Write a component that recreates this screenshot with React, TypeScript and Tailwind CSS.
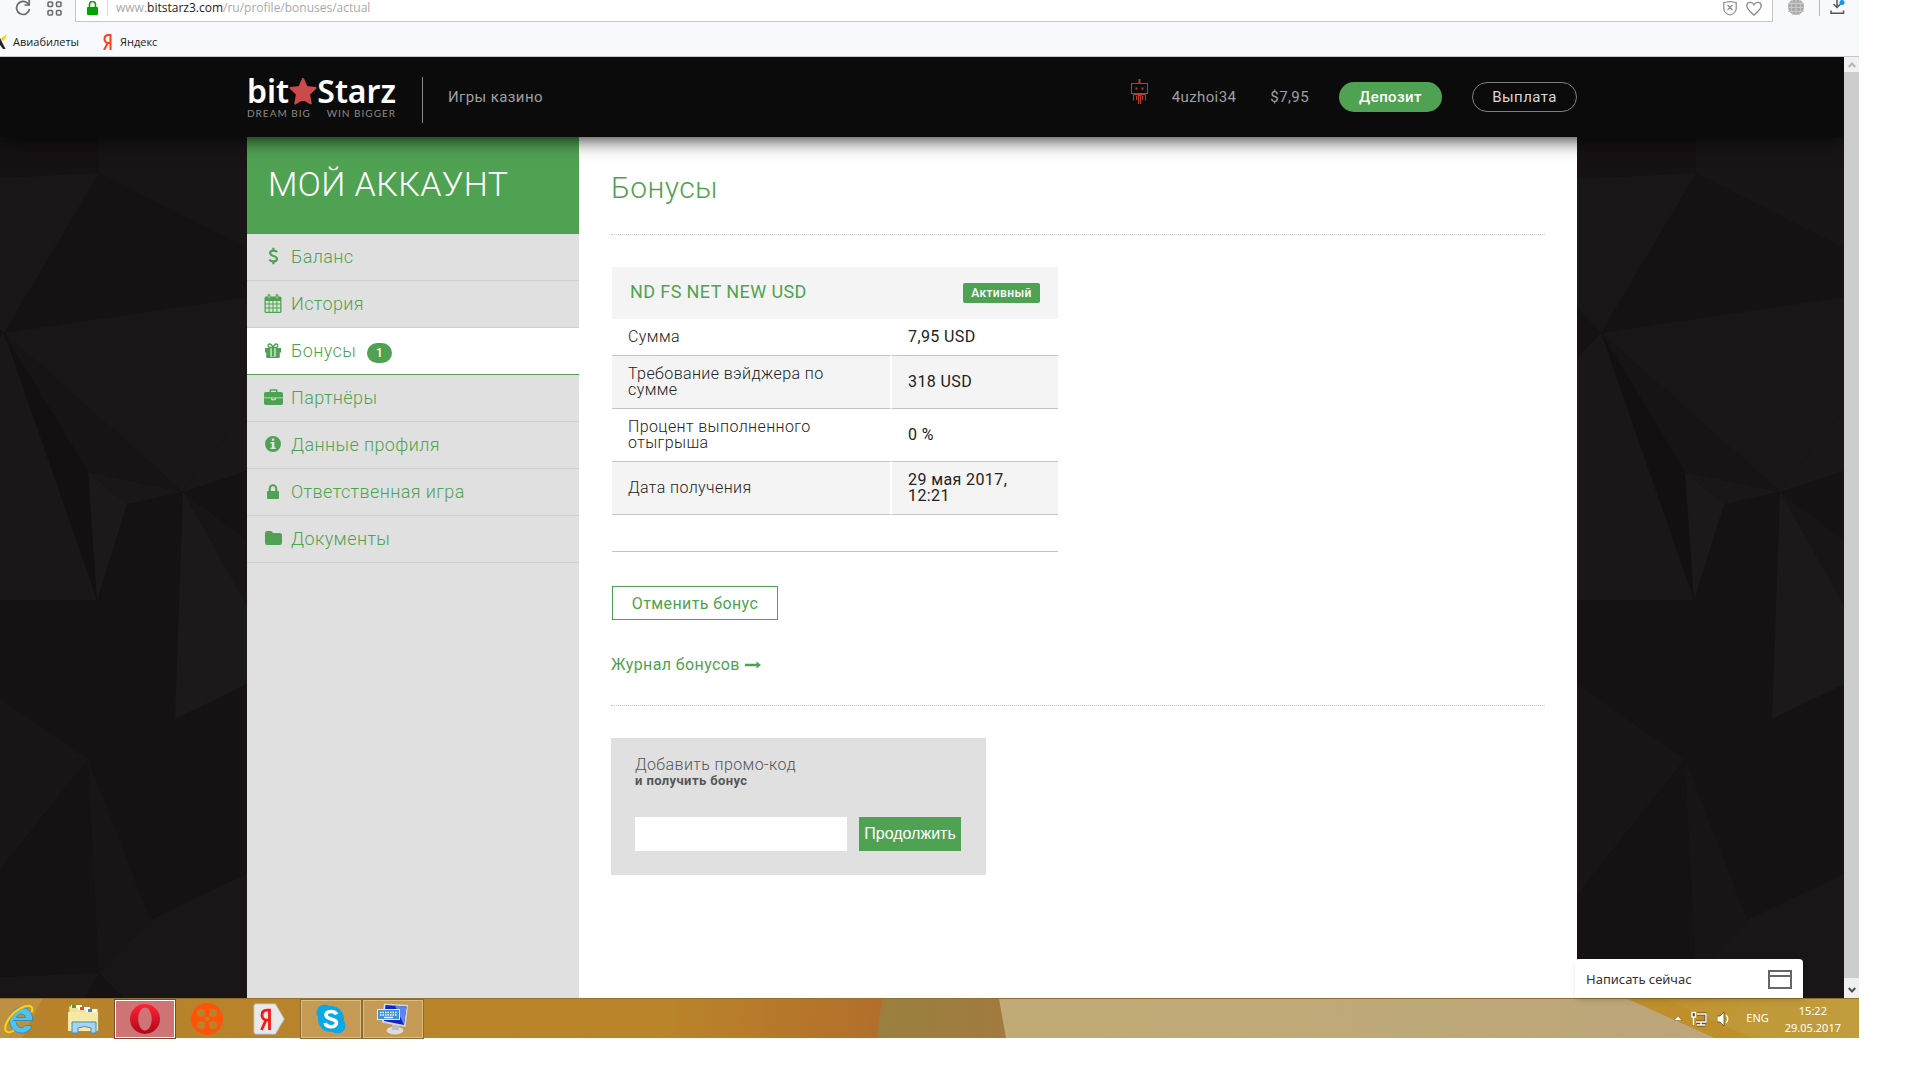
import type { ReactNode } from "react";

const NAV: { label: string; icon: ReactNode; active?: boolean; badge?: string }[] = [
  { label: "Баланс", icon: <DollarIcon /> },
  { label: "История", icon: <CalendarIcon /> },
  { label: "Бонусы", icon: <GiftIcon />, active: true, badge: "1" },
  { label: "Партнёры", icon: <BriefcaseIcon /> },
  { label: "Данные профиля", icon: <InfoIcon /> },
  { label: "Ответственная игра", icon: <LockIcon /> },
  { label: "Документы", icon: <FolderIcon /> },
];

const ROWS = [
  { label: "Сумма", value: "7,95 USD" },
  { label: "Требование вэйджера по сумме", value: "318 USD" },
  { label: "Процент выполненного отыгрыша", value: "0 %" },
  { label: "Дата получения", value: "29 мая 2017, 12:21" },
];

function DollarIcon() {
  return (
    <svg viewBox="0 0 12 20" className="h-[18px]" fill="none" stroke="currentColor" strokeWidth="2.4">
      <path d="M10.2 5.6C9.2 4.500 7.700 4 6 4 3.800 4 2.300 5.100 2.300 6.800 2.300 10.800 10 9 10 13.100 10 15 8.300 16 6 16 4.200 16 2.500 15.300 1.400 14" />
      <path d="M6 .8v3.500M6 15.700v3.500" />
    </svg>
  );
}

function CalendarIcon() {
  return (
    <svg viewBox="0 0 18 19" className="h-[19px]" fill="currentColor">
      <path
        fillRule="evenodd"
        d="M2 2.500h1.500V1.500a1.500 1.500 0 0 1 3 0v1h5v-1a1.500 1.500 0 0 1 3 0v1H16a1.500 1.500 0 0 1 1.500 1.500v13.500A1.500 1.500 0 0 1 16 19H2a1.500 1.500 0 0 1-1.500-1.500V4A1.500 1.500 0 0 1 2 2.500ZM1.800 7v2.600h2.800V7Zm3.800 0v2.600h2.900V7Zm3.900 0v2.600h2.900V7Zm3.900 0v2.600h2.800V7ZM1.800 10.600v3h2.800v-3Zm3.800 0v3h2.900v-3Zm3.900 0v3h2.900v-3Zm3.900 0v3h2.800v-3ZM1.800 14.600v3.200h2.800v-3.200Zm3.800 0v3.200h2.900v-3.200Zm3.900 0v3.200h2.900v-3.200Zm3.900 0v3.200h2.800v-3.200ZM4.600 1.500v3h.8v-3Zm8 0v3h.8v-3Z"
      />
    </svg>
  );
}

function GiftIcon() {
  return (
    <svg viewBox="0 0 16 15" className="h-[15px]" fill="currentColor">
      <path d="M0 5h5.500v4.500H0Zm10.500 0H16v4.500h-5.500ZM1.200 9h4.300v6H2.200a1 1 0 0 1-1-1ZM10.500 9h4.300v5a1 1 0 0 1-1 1h-3.300ZM6.600 5h2.800v8.500H6.600ZM5.500 13.800h5V15h-5Z" />
      <path d="M8 4.500H4.800A1.700 1.700 0 0 1 4.800 1C6.300 1 7.200 2.500 8 4.500 8.800 2.500 9.700 1 11.200 1a1.700 1.700 0 0 1 0 3.500Z" fill="none" stroke="currentColor" strokeWidth="1.300" />
    </svg>
  );
}

function BriefcaseIcon() {
  return (
    <svg viewBox="0 0 19 16" className="h-[16px]" fill="currentColor">
      <path d="M5.500 3V1.500A1.300 1.300 0 0 1 6.800.2h5.400a1.300 1.300 0 0 1 1.300 1.300V3h3.800A1.700 1.700 0 0 1 19 4.700v3.800H0V4.700A1.700 1.700 0 0 1 1.700 3Zm1.500 0h5V1.700H7ZM0 9.300h7.200v1a.9.9 0 0 0 .9.900h2.800a.9.900 0 0 0 .9-.9v-1H19v5a1.700 1.700 0 0 1-1.700 1.700H1.700A1.700 1.700 0 0 1 0 14.300Zm8.300 0h2.400v1H8.300Z" />
    </svg>
  );
}

function InfoIcon() {
  return (
    <svg viewBox="0 0 16 16" className="h-[16px]" fill="currentColor">
      <path fillRule="evenodd" d="M8 0a8 8 0 1 1 0 16A8 8 0 0 1 8 0ZM6.800 2.500v2.300h2.500V2.500ZM5.500 6v1.500h1.300v4H5.500V13h5.200v-1.500H9.400V6Z" />
    </svg>
  );
}

function LockIcon() {
  return (
    <svg viewBox="0 0 12 15" className="h-[15px]" fill="currentColor">
      <path fillRule="evenodd" d="M1.700 7V4.500a4.300 4.300 0 0 1 8.600 0V7h.8a.9.900 0 0 1 .9.900v6.200a.9.900 0 0 1-.9.900H.9a.9.900 0 0 1-.9-.9V7.900A.9.900 0 0 1 .9 7ZM3.800 7h4.400V4.500a2.200 2.200 0 0 0-4.400 0Z" />
    </svg>
  );
}

function FolderIcon() {
  return (
    <svg viewBox="0 0 17 14" className="h-[14px]" fill="currentColor">
      <path d="M0 2.200A2.200 2.200 0 0 1 2.200 0h3.400a2.200 2.200 0 0 1 2.200 2h7A2.200 2.200 0 0 1 17 4.200v7.600a2.200 2.200 0 0 1-2.200 2.200H2.200A2.200 2.200 0 0 1 0 11.800Z" />
    </svg>
  );
}

function Facets({ className }: { className: string }) {
  return (
    <svg viewBox="-22 0 267 861" preserveAspectRatio="xMaxYMin slice" className={className} aria-hidden="true">
      <rect x="-40" width="320" height="900" fill="#161213" />
      <polygon points="-40,43 97,36 2,196 -40,150" fill="#191617" />
      <polygon points="97,0 280,0 280,128 97,36" fill="#191516" />
      <polygon points="2,196 280,155 280,230 181,355" fill="#1a1617" />
      <polygon points="2,196 181,355 86,335" fill="#181415" />
      <polygon points="2,196 86,335 95,463" fill="#141011" />
      <polygon points="2,196 95,463 -40,463 -40,240" fill="#1b1718" />
      <polygon points="86,335 125,367 95,463" fill="#1c191a" />
      <polygon points="86,335 181,355 125,367" fill="#1a1718" />
      <polygon points="181,355 280,230 280,322" fill="#1b1718" />
      <polygon points="181,355 280,430 280,570" fill="#191516" />
      <polygon points="181,355 173,582 280,530" fill="#1c191a" />
      <polygon points="-40,535 86,622 -40,630" fill="#191516" />
      <polygon points="86,622 -40,630 -40,780" fill="#191516" />
      <polygon points="86,622 148,783 97,836" fill="#191516" />
      <polygon points="148,783 280,720 280,900 160,900 97,836" fill="#1a1617" />
      <polygon points="-40,842 97,836 60,900 -40,900" fill="#1a1617" />
    </svg>
  );
}

function BrowserBar() {
  return (
    <div className="flex h-[57px] shrink-0 flex-col border-b border-[#c3c7cb] bg-[#f8f9fc]">
      <div className="flex h-[22px] shrink-0 items-stretch">
        <div className="flex w-[75px] items-center gap-4 pb-[6px] pl-[15px] text-[#6b6b6b]">
          <button aria-label="Обновить">
            <svg viewBox="0 0 16 16" className="size-4" fill="none" stroke="currentColor" strokeWidth="1.700">
              <path d="M13.600 4.500A6.500 6.500 0 1 0 14.500 9" />
              <path d="M14.200 0v5H9.500" />
            </svg>
          </button>
          <button aria-label="Экспресс-панель">
            <svg viewBox="0 0 15 15" className="size-[15px]" fill="none" stroke="currentColor" strokeWidth="1.600">
              <rect x="1" y="1" width="4.500" height="4.500" rx="1" />
              <rect x="9.500" y="1" width="4.500" height="4.500" rx="1" />
              <rect x="1" y="9.500" width="4.500" height="4.500" rx="1" />
              <rect x="9.500" y="9.500" width="4.500" height="4.500" rx="1" />
            </svg>
          </button>
        </div>
        <div className="flex flex-1 items-center border-x border-b border-[#c3c5c9] bg-white pb-[5px] pl-[11px]">
          <svg viewBox="0 0 11 14" className="h-[14px] shrink-0" aria-hidden="true">
            <rect y="6" width="11" height="8" rx="1" fill="#00a400" />
            <path d="M2.500 6V3.500a3 3 0 0 1 6 0V6" fill="none" stroke="#00a400" strokeWidth="1.600" />
          </svg>
          <span className="ml-[9px] h-full w-px bg-[#dcdcdc]" />
          <p className="ml-2 flex-1 font-['Open_Sans'] text-[12px] leading-4 text-[#a9a9a9]">
            www.<span className="text-[#222]">bitstarz3.com</span>/ru/profile/bonuses/actual
          </p>
          <svg viewBox="0 0 14 16" className="mr-[9px] h-4" fill="none" stroke="#8a8a8a" strokeWidth="1.200" aria-hidden="true">
            <path d="M.8 2.500Q4 1.800 7 1.500 10 1.800 13.200 2.500V9Q12.500 13.500 7 15 1.500 13.500.8 9ZM4.500 5l5 5m0-5-5 5" />
          </svg>
          <svg viewBox="0 0 16 15" className="mr-[10px] h-[15px]" fill="none" stroke="#8a8a8a" strokeWidth="1.300" aria-hidden="true">
            <path d="M8 14.200C5 11.500.8 8 .8 4.800.8 1 6 0 8 3.800 10 0 15.200 1 15.200 4.800 15.200 8 11 11.500 8 14.200Z" />
          </svg>
        </div>
        <div className="flex w-[86px] items-start pl-[15px]">
          <svg viewBox="0 0 16 16" className="size-4" aria-hidden="true">
            <circle cx="8" cy="7" r="8" fill="#a9a9a9" />
            <path d="M0 3.500h16M0 7.500h16M0 11.500h16M8 0v15M4.500 0Q2 7.500 4.500 15M11.500 0Q14 7.500 11.500 15" stroke="#c9c9c9" fill="none" />
          </svg>
          <span className="ml-[15px] h-4 w-px bg-[#b8b8b8]" />
          <svg viewBox="0 0 16 15" className="ml-[10px] h-[15px]" fill="none" stroke="#555" strokeWidth="1.500" aria-hidden="true">
            <path d="M7 0v7M3.500 4 7 7.500 10.500 4M1 10.500V13.200h12.500V10.500" />
            <circle cx="12" cy="2.500" r="2.500" fill="#0a96ff" stroke="none" />
          </svg>
        </div>
      </div>
      <nav className="flex flex-1 items-center pt-[6px] font-['Open_Sans'] text-[11px] text-[#222]">
        <a href="#avia" className="flex items-center gap-[6px]">
          <svg viewBox="0 0 7 16" className="h-4" aria-hidden="true">
            <path d="M0 5 7 0 4 7Z" fill="#ffd000" />
            <path d="M0 4 5.500 15H3L0 11Z" fill="#222" />
          </svg>
          Авиабилеты
        </a>
        <a href="#ya" className="ml-6 flex items-center gap-2">
          <svg viewBox="0 0 9 16" className="h-4" fill="none" stroke="#fc3f1d" strokeWidth="2" aria-hidden="true">
            <path d="M7.500 16V1H5.500C2.500 1 1.500 3 1.500 5s1.500 4 4 4h2M4.800 9 1 16" />
          </svg>
          Яндекс
        </a>
      </nav>
    </div>
  );
}

function SiteHeader() {
  return (
    <header className="relative z-10 h-20 shrink-0 bg-[#0b0b0b] pr-5 shadow-[0_0_20px_#000]">
      <div className="mx-auto flex h-full max-w-[1330px] items-center text-[15px] text-[#a0a0a0]">
        <a href="#home" className="flex w-[149px] flex-col font-['Noto_Sans']">
          <span className="flex items-center justify-between text-[32px] leading-8 font-semibold tracking-normal text-white">
            <span>bit</span>
            <svg viewBox="0 0 28 28" className="w-7 shrink-0" fill="#cb4a4a" stroke="#cb4a4a" strokeWidth="2" strokeLinejoin="round" aria-hidden="true">
              <path d="M14 2 17.600 10 26.500 11 20 17.200 21.700 26.500 14 22 6.300 26.500 8 17.200 1.500 11 10.400 10Z" />
            </svg>
            <span>Starz</span>
          </span>
          <span className="flex justify-between font-['Lato'] text-[10px] leading-3 tracking-widest whitespace-nowrap text-[#8a8a8a]">
            <span>DREAM BIG</span>
            <span>WIN BIGGER</span>
          </span>
        </a>
        <span className="mt-[6px] ml-[26px] h-[46px] w-px bg-[#8a8a8a]" />
        <a href="#games" className="ml-[25px]">Игры казино</a>
        <div className="ml-auto flex items-center">
          <svg viewBox="0 0 17 25" className="mb-3 h-[25px]" fill="none" stroke="#c0392f" strokeWidth="1" aria-hidden="true">
            <path d="M8.500 0v4" strokeWidth="2" />
            <rect x=".5" y="4.500" width="16" height="10" />
            <path d="M2.500 21.500v-6h12v6M5.500 21v-4M11.500 21v-4M7.500 25v-8.500M9.500 25v-8.500M6.500 16.500h4" />
            <path d="M4.500 9.500h2M10.500 9.500h2" strokeWidth="2" />
          </svg>
          <a href="#user" className="ml-6 pt-px">4uzhoi34</a>
          <span className="ml-[34px] pt-px">$7,95</span>
          <button className="ml-[30px] h-[30px] w-[103px] rounded-full bg-[#50a253] font-medium text-white">Депозит</button>
          <button className="ml-[30px] h-[30px] w-[105px] rounded-full border border-[#808080] text-[#d8d8d8]">Выплата</button>
        </div>
      </div>
    </header>
  );
}

function Sidebar() {
  return (
    <aside className="w-[332px] shrink-0 bg-[#e0e0e0] font-light text-[#50a253]">
      <h2 className="h-[97px] bg-[#50a253] pt-7 pl-[21px] text-[34px] leading-[38px] text-white">МОЙ АККАУНТ</h2>
      <ul>
        {NAV.map((item) => (
          <li key={item.label}>
            <a
              href="#section"
              className={
                item.active
                  ? "flex h-[47px] items-center border-b border-[#50a253] bg-white pb-[2px] pl-[15px] text-[18px]"
                  : "flex h-[47px] items-center border-b border-[#cfcfcf] pb-[2px] pl-[15px] text-[18px]"
              }
            >
              <span className="flex w-[22px] justify-center">{item.icon}</span>
              <span className="ml-[7px]">{item.label}</span>
              {item.badge && (
                <span className="mt-[6px] ml-[11px] flex h-5 w-[25px] items-center justify-center rounded-full bg-[#50a253] text-[12px] font-medium text-white">
                  {item.badge}
                </span>
              )}
            </a>
          </li>
        ))}
      </ul>
    </aside>
  );
}

function BonusTable() {
  return (
    <table className="ml-px w-[446px] border-separate border-spacing-0 text-left text-[16px] leading-4 text-[#222]">
      <thead>
        <tr>
          <th colSpan={2} className="h-[52px] bg-[#f4f4f4] p-0 font-normal">
            <div className="flex items-center justify-between px-[18px]">
              <span className="pb-[2px] text-[18px] text-[#50a253]">ND FS NET NEW USD</span>
              <span className="flex h-5 w-[77px] items-center justify-center rounded-xs bg-[#50a253] text-[12px] font-medium text-white">
                Активный
              </span>
            </div>
          </th>
        </tr>
      </thead>
      <tbody>
        {ROWS.map((row) => (
          <tr key={row.label} className="even:bg-[#f4f4f4]">
            <th className="w-[280px] border-r-2 border-b border-r-white border-b-[#c4c4c4] py-[10px] pr-10 pl-4 font-light">{row.label}</th>
            <td className="border-b border-[#c4c4c4] py-[10px] pr-4 pl-4">{row.value}</td>
          </tr>
        ))}
        <tr>
          <td colSpan={2} className="h-[37px] border-b border-[#c4c4c4]" />
        </tr>
      </tbody>
    </table>
  );
}

function Content() {
  return (
    <main className="min-w-0 flex-1 bg-white px-8 text-[16px] text-[#50a253]">
      <h1 className="h-[98px] border-b border-dotted border-[#c4c4c4] pt-[33px] text-[30px] leading-9 font-light">Бонусы</h1>
      <div className="pt-8">
        <BonusTable />
      </div>
      <button className="mt-[34px] ml-px block h-[34px] w-[166px] border border-[#50a253] pt-px">Отменить бонус</button>
      <div className="mt-[33px] h-[53px] border-b border-dotted border-[#c4c4c4]">
        <a href="#log" className="inline-flex items-center gap-[5px]">
          Журнал бонусов
          <svg viewBox="0 0 16 8" className="h-2" fill="currentColor" aria-hidden="true">
            <path d="M0 2.800h11.500V.5L16 4l-4.500 3.500V5.200H0Z" />
          </svg>
        </a>
      </div>
      <form className="mt-8 h-[137px] w-[375px] bg-[#e0e0e0] px-6 pt-[19px] leading-4 text-[#555]">
        <label htmlFor="promo" className="block font-light">
          Добавить промо-код
          <strong className="block text-[13px] leading-4 font-bold">и получить бонус</strong>
        </label>
        <div className="mt-7 flex gap-3">
          <input id="promo" className="h-[34px] w-[212px] bg-white px-2" />
          <button type="button" className="h-[34px] w-[102px] bg-[#50a253] font-['Liberation_Sans'] tracking-normal text-white">Продолжить</button>
        </div>
      </form>
    </main>
  );
}

function Scrollbar() {
  return (
    <div className="flex w-[15px] shrink-0 flex-col items-center justify-between bg-[#cdcdcd]">
      <div className="flex h-[15px] w-full items-center justify-center bg-[#f0f0f0]">
        <svg viewBox="0 0 8 6" className="w-2" fill="none" stroke="#b5b5b5" strokeWidth="2"><path d="M.8 5 4 1.500 7.200 5" /></svg>
      </div>
      <div className="flex h-5 w-full items-center justify-center bg-[#f0f0f0] pt-1">
        <svg viewBox="0 0 8 6" className="w-2" fill="none" stroke="#505050" strokeWidth="2"><path d="M.8 1 4 4.500 7.200 1" /></svg>
      </div>
    </div>
  );
}

function Taskbar() {
  return (
    <footer className="relative flex h-10 shrink-0 items-center border-t border-[#96702a] font-['Noto_Sans'] text-[11px] text-white">
      <svg viewBox="0 0 1859 40" preserveAspectRatio="none" className="absolute inset-0 h-full w-full" aria-hidden="true">
        <defs>
          <linearGradient id="sand">
            <stop offset="0" stopColor="#b8822b" />
            <stop offset=".75" stopColor="#ba842a" />
            <stop offset="1" stopColor="#b26e2a" />
          </linearGradient>
          <linearGradient id="olive">
            <stop offset="0" stopColor="#9a803e" />
            <stop offset="1" stopColor="#a27a40" />
          </linearGradient>
          <linearGradient id="gold">
            <stop offset="0" stopColor="#c08f2a" />
            <stop offset=".5" stopColor="#c09837" />
            <stop offset="1" stopColor="#c19d3e" />
          </linearGradient>
          <linearGradient id="dune">
            <stop offset="0" stopColor="#c0ab76" />
            <stop offset="1" stopColor="#bca67a" />
          </linearGradient>
        </defs>
        <rect width="885" height="40" fill="url(#sand)" />
        <polygon points="0,0 42,0 22,40 0,40" fill="#bd9141" />
        <polygon points="882,0 1000,0 1008,40 877,40" fill="url(#olive)" />
        <polygon points="999,0 1640,0 1725,40 1006,40" fill="url(#dune)" />
        <polygon points="1628,0 1859,0 1859,40 1715,40" fill="url(#gold)" />
        <polygon points="1628,0 1665,0 1752,40 1715,40" fill="#bf8f2b" />
      </svg>
      <div className="relative flex h-full items-center gap-[2px]">
        <button aria-label="Internet Explorer" className="w-[51px] pl-1">
          <svg viewBox="0 0 32 32" className="size-8">
            <path d="M9 17.500h19.500C29 9 24 4.500 17.500 4.500S5.500 10 5.500 17s5 13 12 13c5 0 9-3 10.500-7.500h-7c-2 3.500-8 2.800-8.500-2.500M12.500 14.500c1-4.500 8.500-4.500 9 0Z" fill="#4fc3ee" stroke="#2a84b8" strokeWidth=".8" />
            <path d="M27.500 9.500C30.500 2 24 1 16 5.500 6 11-1 23 2 28c1.500 2 5 1.500 8-.5" fill="none" stroke="#c99612" strokeWidth="3" />
            <path d="M27.500 9.500C30.500 2 24 1 16 5.500 6 11-1 23 2 28c1.500 2 5 1.500 8-.5" fill="none" stroke="#fbd024" strokeWidth="2" />
          </svg>
        </button>
        <button aria-label="Проводник" className="flex w-[60px] justify-center">
          <svg viewBox="0 0 32 32" className="size-8">
            <path d="M2 28V3h12l2 3h15v22Z" fill="#f3e296" stroke="#b59a48" strokeWidth=".8" />
            <rect x="4" y="2" width="11" height="3" fill="#fff" /><rect x="5" y="2" width="4" height="3" fill="#1fb83a" />
            <rect x="11" y="4" width="12" height="3" fill="#fff" /><rect x="13" y="4" width="4" height="3" fill="#d9502c" />
            <rect x="19" y="6" width="11" height="3" fill="#fff" /><rect x="21" y="6" width="4" height="3" fill="#2a8ee0" />
            <path d="M1 9h30v19H1Z" fill="#f6e9a8" />
            <path d="M5 30V19h24v11h-5v-5q-6.500-3-13 0v5Z" fill="#a6d5ef" stroke="#3f8fc0" />
          </svg>
        </button>
        <button aria-label="Opera" className="flex h-[38px] w-[60px] items-center justify-center border border-white bg-[#cf7475] outline outline-[#7a4a30]">
          <svg viewBox="0 0 30 30" className="size-[30px]">
            <defs><linearGradient id="op" x2="0" y2="1"><stop stopColor="#ff2337" /><stop offset="1" stopColor="#b00718" /></linearGradient></defs>
            <path fillRule="evenodd" fill="url(#op)" d="M15 0a15 15 0 1 1 0 30 15 15 0 0 1 0-30Zm0 3.500C11 3.500 8.300 9 8.300 15S11 26.500 15 26.500s6.700-5.500 6.700-11.500S19 3.500 15 3.500Z" />
          </svg>
        </button>
        <button aria-label="Кино" className="flex w-[60px] justify-center">
          <svg viewBox="0 0 32 32" className="size-8">
            <path fill="#ff5408" fillRule="evenodd" d="M16 0a16 16 0 1 1 0 32 16 16 0 0 1 0-32ZM10 6a4 4 0 1 0 0 8 4 4 0 0 0 0-8Zm12 0a4 4 0 1 0 0 8 4 4 0 0 0 0-8ZM10 18a4 4 0 1 0 0 8 4 4 0 0 0 0-8Zm12 0a4 4 0 1 0 0 8 4 4 0 0 0 0-8Zm-6-4.300a2.300 2.300 0 1 0 0 4.600 2.300 2.300 0 0 0 0-4.600Z" />
          </svg>
        </button>
        <button aria-label="Яндекс" className="flex w-[60px] justify-center">
          <svg viewBox="0 0 32 32" className="size-8">
            <path d="M3 .7h19.500L31.500 16l-9 15.300H3A2.200 2.200 0 0 1 .8 29V3A2.200 2.200 0 0 1 3 .7Z" fill="#e9e9e9" stroke="#a8a8a8" />
            <path d="M16.500 27V7.200h-2.500c-3.500 0-5 2.200-5 4.900 0 3 2 5 5 5h2.500M13 17 8.500 27" fill="none" stroke="#f31a12" strokeWidth="2.800" />
          </svg>
        </button>
        <button aria-label="Skype" className="flex h-[38px] w-[60px] items-center justify-center border border-[#d9bd85] bg-[#c59a55] outline outline-[#8f6a30]">
          <svg viewBox="0 0 30 30" className="size-[30px]">
            <circle cx="15" cy="15" r="13" fill="#0ba8e6" /><circle cx="8.500" cy="8.500" r="8" fill="#0ba8e6" /><circle cx="21.500" cy="21.500" r="8" fill="#0ba8e6" />
            <path d="M20.500 10.500C19 6.500 10 6.500 10 11c0 5 10.500 3 10.500 8 0 5-10 5-11.500 0" fill="none" stroke="#fff" strokeWidth="3.600" />
          </svg>
        </button>
        <button aria-label="Экранная клавиатура" className="flex h-[38px] w-[60px] items-center justify-center border border-[#d9bd85] bg-[#c59a55] outline outline-[#8f6a30]">
          <svg viewBox="0 0 32 32" className="size-8">
            <ellipse cx="18" cy="27.500" rx="8.500" ry="4" fill="#dcdcdc" /><path d="M15 20h7v7h-7Z" fill="#bdbdbd" />
            <path d="M7 .5 31 2 28.500 24 5 19.500Z" fill="#d5d8e4" /><path d="M8.500 2 29.500 3.500 27 22 7 18Z" fill="#1226c0" /><path d="M18 2.700 29.500 3.500 27 22Z" fill="#5c86ea" />
            <rect x=".5" y="6.500" width="22" height="10" fill="#3d93d6" stroke="#d8ecfa" />
            <path d="M3 9.500h17M3 12h17" stroke="#fff" strokeWidth="1.400" strokeDasharray="1.500 1" /><path d="M7 14.500h9" stroke="#fff" strokeWidth="1.400" />
          </svg>
        </button>
      </div>
      <div className="relative ml-auto flex items-center pr-[18px]">
        <svg viewBox="0 0 9 5" className="w-2" fill="#fff" stroke="#5a4a20" strokeWidth=".5"><path d="M0 5 4.500 0 9 5Z" /></svg>
        <svg viewBox="0 0 16 16" className="ml-[9px] size-4" fill="none" stroke="#fff" strokeWidth="1.400">
          <path d="M6 3h9v8H5M10 11v3M6 14h8" stroke="#5a4a20" strokeWidth="3" />
          <path d="M6 3h9v8H5M10 11v3M6 14h8" />
          <path d="M2.500 6v8" /><rect x="1" y="1.500" width="3.500" height="4.500" fill="#5a4a20" />
        </svg>
        <svg viewBox="0 0 14 16" className="ml-[10px] h-4" fill="#fff">
          <path d="M0 5h3l4-4v14l-4-4H0Z" stroke="#5a4a20" strokeWidth=".8" /><path d="M9 4q3.500 4 0 8" fill="none" stroke="#fff" strokeWidth="1.300" />
        </svg>
        <span className="ml-[15px]">ENG</span>
        <span className="ml-4 text-center leading-[17px]">15:22<br />29.05.2017</span>
      </div>
    </footer>
  );
}

export default function App() {
  return (
    <div className="flex h-screen flex-col bg-white pr-[61px] pb-[42px] font-['Roboto',sans-serif]">
      <BrowserBar />
      <div className="relative flex min-h-0 flex-1">
        <div className="flex min-w-0 flex-1 flex-col overflow-hidden bg-[#161213] tracking-wide">
          <SiteHeader />
          <div className="relative min-h-0 flex-1 pr-5">
            <Facets className="absolute top-0 left-0 h-full w-[247px]" />
            <Facets className="absolute top-0 right-0 h-full w-[267px]" />
            <div className="relative mx-auto flex h-full max-w-[1330px]">
              <Sidebar />
              <Content />
            </div>
          </div>
        </div>
        <Scrollbar />
        <button className="absolute right-14 bottom-0 z-20 flex h-[39px] w-[228px] items-center justify-between rounded-t bg-white px-[11px] pt-[2px] font-['Noto_Sans'] text-[13px] text-[#333] shadow-md">
          Написать сейчас
          <svg viewBox="0 0 24 19" className="h-[19px]" fill="none" stroke="#666" strokeWidth="2" aria-hidden="true">
            <path d="M1 1h22v17H1ZM1 6h22" />
          </svg>
        </button>
      </div>
      <Taskbar />
    </div>
  );
}
